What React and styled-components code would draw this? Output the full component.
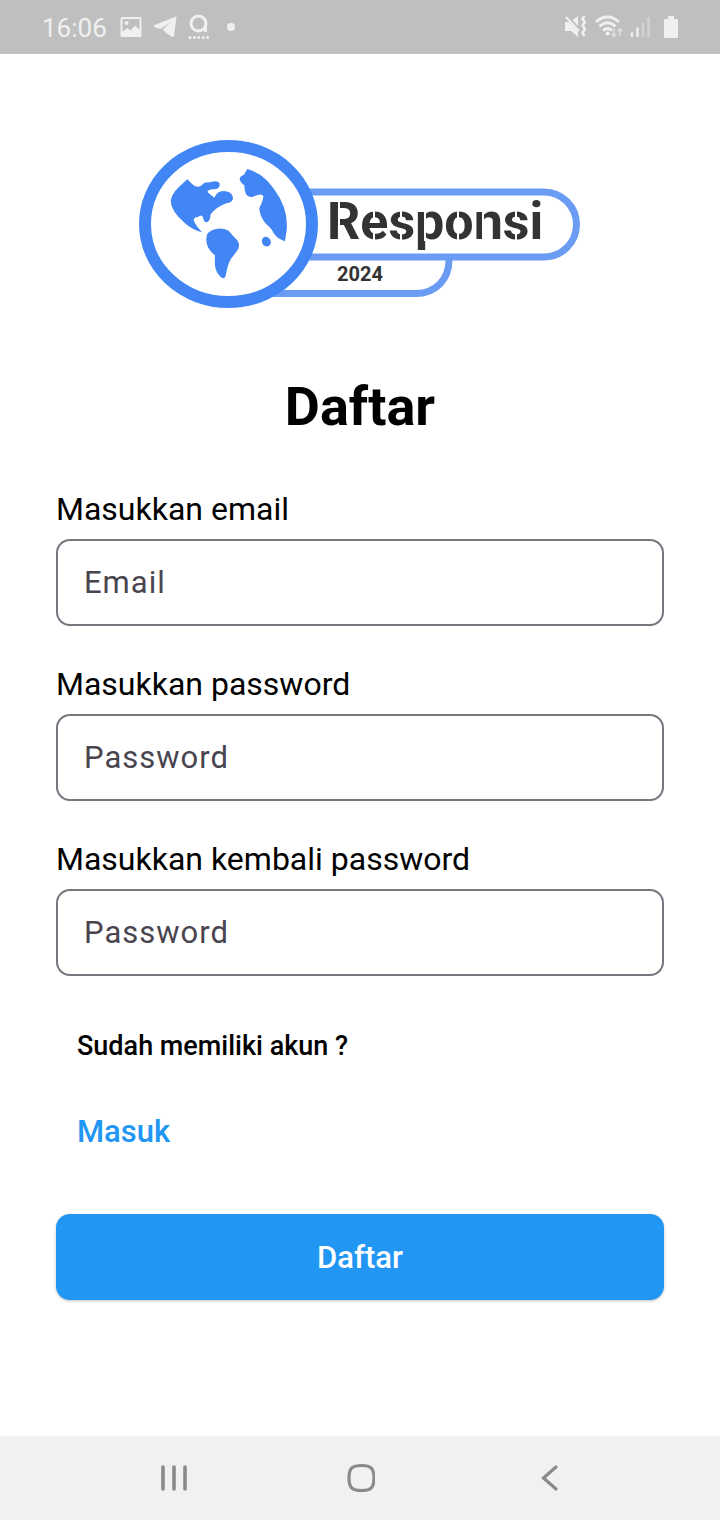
import React from "react";
import styled, { createGlobalStyle } from "styled-components";

const GlobalStyle = createGlobalStyle`
  *, *::before, *::after { box-sizing: border-box; }
  body { margin: 0; background: #fff; font-family: Roboto, "Liberation Sans", sans-serif; color: #000; }
`;

const Screen = styled.div`
  min-height: 100vh;
  display: flex;
  flex-direction: column;
`;

const StatusBar = styled.header`
  height: 54px;
  padding: 0 42px;
  background: #bfbfbf;
  color: #f0f0f0;
  display: flex;
  align-items: center;
  justify-content: space-between;
`;

const StatusGroup = styled.div`
  display: flex;
  align-items: center;
  gap: ${(p) => p.$gap}px;
`;

const Clock = styled.time`
  font-size: 26px;
  line-height: 32px;
  padding: 2px 2px 0 0;
`;

const Spacer = styled.span`
  width: ${(p) => p.$width}px;
`;

const Main = styled.main`
  flex: 1;
  padding: 86px 56px 136px;
  display: flex;
  flex-direction: column;
`;

const LogoArt = styled.svg`
  display: block;
  width: 442px;
  max-width: 100%;
  align-self: center;
`;

const LogoText = styled.text`
  font-family: Roboto, sans-serif;
  font-weight: 700;
  font-size: ${(p) => p.$size}px;
  fill: #333;
`;

const Title = styled.h1`
  margin: 67px 0 51px;
  font-size: 54px;
  line-height: 64px;
  font-weight: 700;
  text-align: center;
`;

const Form = styled.form`
  display: flex;
  flex-direction: column;
`;

const Fields = styled.div`
  display: flex;
  flex-direction: column;
  gap: 39px;
`;

const Field = styled.div`
  display: flex;
  flex-direction: column;
  gap: 11px;
`;

const Label = styled.label`
  font-size: 32px;
  line-height: 38px;
`;

const TextInput = styled.input`
  width: 100%;
  height: 87px;
  padding: 0 26px;
  border: 2px solid #79747e;
  border-radius: 14px;
  background: #fff;
  color: #000;
  font: inherit;
  font-size: 31px;
  letter-spacing: 1px;
  outline: none;
  &::placeholder { color: #49454f; opacity: 1; }
  &:focus { border-color: #2196f3; }
`;

const Account = styled.div`
  padding: 54px 21px 63px;
  display: flex;
  flex-direction: column;
  align-items: flex-start;
  gap: 51px;
  font-weight: 500;
`;

const Question = styled.p`
  margin: 0;
  font-size: 27px;
  line-height: 32px;
`;

const LoginLink = styled.a`
  font-size: 31px;
  line-height: 38px;
  color: #2196f3;
  text-decoration: none;
`;

const SubmitButton = styled.button`
  height: 86px;
  border: 0;
  border-radius: 14px;
  background: #2196f3;
  color: #fff;
  font: inherit;
  font-size: 31px;
  font-weight: 500;
  box-shadow: 0 1px 3px rgba(0, 0, 0, 0.25);
  cursor: pointer;
`;

const NavBar = styled.nav`
  height: 84px;
  padding: 0 80px;
  background: #f1f1f1;
  display: grid;
  grid-template-columns: repeat(3, 1fr);
`;

const NavButton = styled.button`
  border: 0;
  padding: 0;
  background: none;
  color: #8a8a8a;
  display: flex;
  align-items: center;
  justify-content: center;
  cursor: pointer;
`;

function Logo() {
  return (
    <LogoArt viewBox="0 0 442 168" role="img" aria-label="Responsi 2024">
      <g fill="none" stroke="#6a9cf3" strokeWidth="7">
        <path d="M168 52H405A32.5 32.5 0 0 1 405 117H165" />
        <path d="M310 117v3C310 140 296 153.500 277 153.500H130" />
      </g>
      <ellipse cx="89.500" cy="84" rx="83.500" ry="78" fill="#fff" stroke="#4286f5" strokeWidth="12" />
      <g transform="translate(-9 -10) scale(.33333)" fill="#4286f5">
        <path d="M172 148L186 162Q205 180 223 158Q240 158 253 154Q272 155 269 166Q267 179 249 178Q235 179 232 186L253 203Q261 184 280 183Q306 184 309 203Q309 217 289 220Q257 232 242 253Q240 278 228 277Q221 276 219 261Q213 252 204 261Q192 261 191 271Q197 287 216 307Q186 299 164 279Q123 243 122 213Q125 191 149 169Z" />
        <path d="M257 297Q278 293 296 302Q309 318 323 332Q331 346 323 360L302 388Q292 406 287 438Q281 450 272 440Q258 428 255 407Q254 386 255 376Q229 357 229 331Q226 304 257 297Z" />
        <path d="M352 117Q400 130 432 177Q476 236 470 301L465 334Q442 327 431 310Q426 296 408 282Q388 257 388 234Q400 211 400 198Q394 188 369 200Q343 207 343 166Q329 155 329 146Q330 138 342 134Z" />
        <ellipse cx="409" cy="335" rx="13" ry="15" transform="rotate(-35 409 335)" />
      </g>
      <LogoText x="188" y="99" $size={52}>Responsi</LogoText>
      <g stroke="#fff" strokeWidth="2" fill="none">
        <path d="M200 60V101M235 70V78M235 91V101M262 70V78M262 92V101M286 72V101M319 70V101M344 70V101M377 70V78M377 92V101" />
      </g>
      <LogoText x="198" y="141" $size={20}>2024</LogoText>
    </LogoArt>
  );
}

function PictureIcon() {
  return (
    <svg width="22" height="22" viewBox="0 0 22 22" aria-hidden="true">
      <path fill="currentColor" fillRule="evenodd" d="M2 1H20a1.500 1.500 0 0 1 1.500 1.500V19.500a1.500 1.500 0 0 1-1.500 1.500H2a1.500 1.500 0 0 1-1.500-1.500V2.500A1.500 1.500 0 0 1 2 1ZM2.500 3V15.500L7.500 12L10.500 14.500L15 9.500L19.500 14V3ZM6.500 5a2 2 0 1 1 0 4a2 2 0 0 1 0-4Z" />
    </svg>
  );
}

function PlaneIcon() {
  return (
    <svg width="24" height="22" viewBox="0 0 24 22" aria-hidden="true">
      <path fill="currentColor" d="M23.500 1L21 20Q20.500 21.500 18.500 20.500L12.500 16.500L10 13.500L18 6L7.500 13L1 11Q0 10 1.500 9L22 1Q23 0 23.500 1Z" />
    </svg>
  );
}

function DottedRingIcon() {
  return (
    <svg width="22" height="26" viewBox="0 0 22 26" aria-hidden="true">
      <circle cx="10.500" cy="9.500" r="7.500" fill="none" stroke="currentColor" strokeWidth="3" />
      <path d="M17.500 9v9" stroke="currentColor" strokeWidth="3" />
      <path d="M2 23.500H22" stroke="currentColor" strokeWidth="3" strokeLinecap="round" strokeDasharray="0 4.400" />
    </svg>
  );
}

function DotIcon() {
  return (
    <svg width="8" height="8" viewBox="0 0 8 8" aria-hidden="true">
      <circle cx="4" cy="4" r="4" fill="currentColor" />
    </svg>
  );
}

function MuteVibrateIcon() {
  return (
    <svg width="24" height="24" viewBox="0 0 24 24" aria-hidden="true">
      <path fill="currentColor" d="M1 7H5L14 16V22L7 16H1ZM8.500 5L14 1V11Z" />
      <path d="M2 2L15 16" stroke="currentColor" strokeWidth="2" />
      <path d="M20.500 1l-2 3l2.500 3l-2.500 3.500l2.500 3.500l-2.500 4l2 3" fill="none" stroke="currentColor" strokeWidth="2.600" strokeLinejoin="round" />
    </svg>
  );
}

function WifiIcon() {
  return (
    <svg width="28" height="24" viewBox="0 0 28 24" aria-hidden="true">
      <g fill="none" stroke="currentColor" strokeWidth="2.700">
        <path d="M1 7Q12.500-3 24 7" />
        <path d="M4.500 11.500Q12.500 4 20.500 11.500" />
        <path d="M8 15.500Q12.500 11.500 17 15.500" />
      </g>
      <circle cx="12.500" cy="18.500" r="2" fill="currentColor" />
      <path d="M19 13V21M16.500 18.500L19 21.500L21.500 18.500M25 21V14M22.500 16.500L25 13.500L27.500 16.500" fill="none" stroke="#dcdcdc" strokeWidth="1.600" />
    </svg>
  );
}

function SignalIcon() {
  return (
    <svg width="20" height="22" viewBox="0 0 20 22" aria-hidden="true">
      <g strokeWidth="2.400" strokeLinecap="round">
        <path d="M2 17.500V20M7.500 12.500V20" stroke="currentColor" />
        <path d="M13 7.500V20M18.500 2V20" stroke="#d3d3d3" />
      </g>
    </svg>
  );
}

function BatteryIcon() {
  return (
    <svg width="14" height="22" viewBox="0 0 14 22" aria-hidden="true">
      <path fill="currentColor" d="M4 0H10V3H13a1 1 0 0 1 1 1V21a1 1 0 0 1-1 1H1a1 1 0 0 1-1-1V4a1 1 0 0 1 1-1H4Z" />
    </svg>
  );
}

const FIELDS = [
  { id: "email", label: "Masukkan email", type: "email", hint: "Email" },
  { id: "password", label: "Masukkan password", type: "password", hint: "Password" },
  { id: "confirm", label: "Masukkan kembali password", type: "password", hint: "Password" },
];

export default function App() {
  return (
    <Screen>
      <GlobalStyle />
      <StatusBar>
        <StatusGroup $gap={11}>
          <Clock>16:06</Clock>
          <PictureIcon />
          <PlaneIcon />
          <DottedRingIcon />
          <StatusGroup $gap={0}>
            <Spacer $width={6} />
            <DotIcon />
          </StatusGroup>
        </StatusGroup>
        <StatusGroup $gap={7}>
          <MuteVibrateIcon />
          <WifiIcon />
          <SignalIcon />
          <Spacer $width={0} />
          <BatteryIcon />
        </StatusGroup>
      </StatusBar>
      <Main>
        <Logo />
        <Title>Daftar</Title>
        <Form onSubmit={(e) => e.preventDefault()}>
          <Fields>
            {FIELDS.map((f) => (
              <Field key={f.id}>
                <Label htmlFor={f.id}>{f.label}</Label>
                <TextInput id={f.id} type={f.type} placeholder={f.hint} />
              </Field>
            ))}
          </Fields>
          <Account>
            <Question>Sudah memiliki akun ?</Question>
            <LoginLink href="#masuk">Masuk</LoginLink>
          </Account>
          <SubmitButton type="submit">Daftar</SubmitButton>
        </Form>
      </Main>
      <NavBar aria-label="Sistem">
        <NavButton type="button" aria-label="Aplikasi terbaru">
          <svg width="28" height="28" viewBox="0 0 28 28" aria-hidden="true">
            <path d="M4 3V25M15 3V25M26 3V25" stroke="currentColor" strokeWidth="3.600" strokeLinecap="round" />
          </svg>
        </NavButton>
        <NavButton type="button" aria-label="Beranda">
          <svg width="30" height="30" viewBox="0 0 30 30" aria-hidden="true">
            <path d="M16.500 2.500C26 2.500 29 5.500 29 15S26 27.500 16.500 27.500S4 24.500 4 15S7 2.500 16.500 2.500Z" fill="none" stroke="currentColor" strokeWidth="3.200" />
          </svg>
        </NavButton>
        <NavButton type="button" aria-label="Kembali">
          <svg width="24" height="28" viewBox="0 0 24 28" aria-hidden="true">
            <path d="M21 3L8.500 14L21 25" fill="none" stroke="currentColor" strokeWidth="3.200" strokeLinecap="round" />
          </svg>
        </NavButton>
      </NavBar>
    </Screen>
  );
}
